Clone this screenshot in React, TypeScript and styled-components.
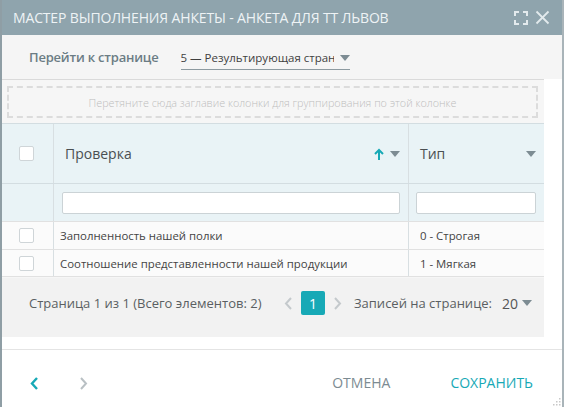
import React from "react";
import styled, { createGlobalStyle } from "styled-components";

const teal = "#17a9b6";

const GlobalStyle = createGlobalStyle`
  html, body {
    margin: 0;
    padding: 0;
    background: #ffffff;
  }
  body {
    font-family: "Open Sans", "Noto Sans", sans-serif;
  }
  * { box-sizing: border-box; }
`;

const Window = styled.div`
  width: 564px;
  height: 407px;
  display: flex;
  flex-direction: column;
  border-left: 2px solid #8f9ea5;
  border-right: 2px solid #a9b4b9;
  background: #ffffff;
  overflow: hidden;
  position: relative;
`;

const TitleBar = styled.div`
  height: 35px;
  flex-shrink: 0;
  background: #8fa4ad;
  display: flex;
  align-items: center;
  justify-content: space-between;
  padding: 0 12px 0 11px;
`;

const Title = styled.div`
  color: #eef3f5;
  font-size: 14px;
  letter-spacing: -0.15px;
`;

const TitleTools = styled.div`
  display: flex;
  align-items: center;
  gap: 7px;
`;

const PageBar = styled.div`
  height: 44px;
  flex-shrink: 0;
  background: #f5f5f5;
  display: flex;
  align-items: center;
  padding-left: 27px;
  gap: 22px;
`;

const PageLabel = styled.div`
  color: #6b7c84;
  font-size: 13px;
  font-weight: 600;
  letter-spacing: -0.2px;
`;

const Select = styled.div`
  width: 169px;
  height: 24px;
  display: flex;
  align-items: center;
  border-bottom: 1px solid #8d9aa0;
  margin-top: 2px;
  gap: 6px;
`;

const SelectText = styled.div`
  flex: 1;
  overflow: hidden;
  white-space: nowrap;
  font-size: 11.5px;
  color: #3f3f3f;
`;

const Caret = styled.span<{ color?: string; size?: number }>`
  display: inline-block;
  width: 0;
  height: 0;
  border-left: ${({ size }) => size ?? 5}px solid transparent;
  border-right: ${({ size }) => size ?? 5}px solid transparent;
  border-top: ${({ size }) => (size ?? 5) + 1}px solid ${({ color }) => color ?? "#7d8c93"};
`;

const GridArea = styled.div`
  width: 542px;
  background: #f6f6f6;
  border-top: 1px solid #dadada;
  display: flex;
  flex-direction: column;
`;

const GroupPanel = styled.div`
  margin: 6px 6px 5px 5px;
  height: 32px;
  border: 2px dashed #dcdcdc;
  display: flex;
  align-items: center;
  justify-content: center;
  color: #bdbdbd;
  font-size: 10.8px;
  font-weight: 300;
`;

const Row = styled.div<{ kind: "head" | "filter" | "data" }>`
  display: grid;
  grid-template-columns: 51px 355px 136px;
  height: ${({ kind }) => (kind === "head" ? 60 : kind === "filter" ? 38 : 28)}px;
  background: ${({ kind }) => (kind === "data" ? "#fbfbfb" : "#e9f3f6")};
  border-top: 1px solid ${({ kind }) => (kind === "data" ? "#e1e1e1" : "#d3dde1")};
  &:last-of-type {
    border-bottom: 1px solid #e1e1e1;
  }
`;

const Cell = styled.div<{ divider?: boolean; pad?: number }>`
  display: flex;
  align-items: center;
  padding-left: ${({ pad }) => pad ?? 0}px;
  padding-right: 8px;
  border-left: ${({ divider }) => (divider ? "1px solid #d8dfe2" : "none")};
  min-width: 0;
`;

const CheckCell = styled(Cell)`
  justify-content: center;
  padding: 0 3px 0 0;
`;

const CheckBox = styled.div`
  width: 15px;
  height: 15px;
  background: #ffffff;
  border: 1px solid #cfd5d8;
  border-radius: 2px;
`;

const HeadText = styled.div`
  flex: 1;
  font-size: 14px;
  color: #4a4f52;
`;

const SortUp = styled.svg`
  margin-right: 6px;
`;

const FilterInput = styled.input`
  width: 100%;
  height: 22px;
  border: 1px solid #cbd3d6;
  background: #ffffff;
  border-radius: 2px;
  outline: none;
`;

const DataText = styled.div`
  font-size: 11.4px;
  color: #444444;
  white-space: nowrap;
  overflow: hidden;
`;

const Pager = styled.div`
  height: 59px;
  margin-top: 1px;
  background: #f2f2f2;
  display: flex;
  align-items: center;
  padding-left: 27px;
  padding-bottom: 9px;
  font-size: 13px;
  color: #5a5f62;
`;

const PagerInfo = styled.div`
  width: 255px;
`;

const PageNav = styled.div`
  display: flex;
  align-items: center;
  gap: 8px;
  margin-right: 12px;
`;

const PageNumber = styled.div`
  width: 24px;
  height: 24px;
  background: ${teal};
  color: #ffffff;
  border-radius: 2px;
  display: flex;
  align-items: center;
  justify-content: center;
  font-size: 14px;
`;

const PerPage = styled.div`
  display: flex;
  align-items: center;
  gap: 4px;
`;

const PerPageValue = styled.span`
  margin-left: 6px;
  font-size: 14px;
  color: #555;
`;

const Footer = styled.div`
  margin-top: auto;
  height: 58px;
  border-top: 1px solid #e4e4e4;
  display: flex;
  align-items: center;
  padding: 8px 29px 0 28px;
`;

const StepNav = styled.div`
  display: flex;
  align-items: center;
  gap: 40px;
  flex: 1;
  padding-top: 2px;
`;

const FooterButton = styled.button<{ primary?: boolean }>`
  background: none;
  border: none;
  padding: 0;
  margin-left: ${({ primary }) => (primary ? 60 : 0)}px;
  font-family: inherit;
  font-size: 14px;
  color: ${({ primary }) => (primary ? teal : "#7c8b92")};
  font-weight: ${({ primary }) => (primary ? 500 : 400)};
  cursor: pointer;
`;

const Grip = styled.svg`
  position: absolute;
  right: 1px;
  bottom: 1px;
`;

const Chevron = ({ dir, color, w = 7, h = 12, sw = 2 }: { dir: "l" | "r"; color: string; w?: number; h?: number; sw?: number }) => (
  <svg width={w + 2} height={h + 2} viewBox={`0 0 ${w + 2} ${h + 2}`}>
    <polyline
      points={dir === "l" ? `${w},1 2,${h / 2 + 1} ${w},${h + 1}` : `2,1 ${w},${h / 2 + 1} 2,${h + 1}`}
      fill="none"
      stroke={color}
      strokeWidth={sw}
    />
  </svg>
);

const rows = [
  { name: "Заполненность нашей полки", type: "0 - Строгая" },
  { name: "Соотношение представленности нашей продукции", type: "1 - Мягкая" },
];

export default function App() {
  return (
    <>
      <GlobalStyle />
      <Window>
        <TitleBar>
          <Title>МАСТЕР ВЫПОЛНЕНИЯ АНКЕТЫ - АНКЕТА ДЛЯ ТТ ЛЬВОВ</Title>
          <TitleTools>
            <svg width="14" height="14" viewBox="0 0 14 14" fill="none" stroke="#e3eaed" strokeWidth="2">
              <polyline points="1,5 1,1 5,1" />
              <polyline points="9,1 13,1 13,5" />
              <polyline points="13,9 13,13 9,13" />
              <polyline points="5,13 1,13 1,9" />
            </svg>
            <svg width="15" height="15" viewBox="0 0 15 15" stroke="#e3eaed" strokeWidth="1.8">
              <line x1="1.5" y1="1.5" x2="13.5" y2="13.5" />
              <line x1="13.5" y1="1.5" x2="1.5" y2="13.5" />
            </svg>
          </TitleTools>
        </TitleBar>

        <PageBar>
          <PageLabel>Перейти к странице</PageLabel>
          <Select>
            <SelectText>5 — Результирующая страница</SelectText>
            <Caret />
          </Select>
        </PageBar>

        <GridArea>
          <GroupPanel>Перетяните сюда заглавие колонки для группирования по этой колонке</GroupPanel>

          <div>
            <Row kind="head">
              <CheckCell>
                <CheckBox />
              </CheckCell>
              <Cell divider pad={11}>
                <HeadText>Проверка</HeadText>
                <SortUp width="10" height="12" viewBox="0 0 10 12" fill="none" stroke={teal} strokeWidth="2">
                  <line x1="5" y1="2" x2="5" y2="12" />
                  <polyline points="1,6 5,2 9,6" />
                </SortUp>
                <Caret />
              </Cell>
              <Cell divider pad={11}>
                <HeadText>Тип</HeadText>
                <Caret />
              </Cell>
            </Row>
            <Row kind="filter">
              <CheckCell />
              <Cell divider pad={8}>
                <FilterInput />
              </Cell>
              <Cell divider pad={7}>
                <FilterInput />
              </Cell>
            </Row>
            {rows.map((r) => (
              <Row kind="data" key={r.name}>
                <CheckCell>
                  <CheckBox />
                </CheckCell>
                <Cell divider pad={6}>
                  <DataText>{r.name}</DataText>
                </Cell>
                <Cell divider pad={11}>
                  <DataText>{r.type}</DataText>
                </Cell>
              </Row>
            ))}
          </div>

          <Pager>
            <PagerInfo>Страница 1 из 1 (Всего элементов: 2)</PagerInfo>
            <PageNav>
              <Chevron dir="l" color="#c4c9cc" w={7} h={11} />
              <PageNumber>1</PageNumber>
              <Chevron dir="r" color="#c4c9cc" w={7} h={11} />
            </PageNav>
            <PerPage>
              Записей на странице:
              <PerPageValue>20</PerPageValue>
              <Caret />
            </PerPage>
          </Pager>
        </GridArea>

        <Footer>
          <StepNav>
            <Chevron dir="l" color={teal} w={7} h={11} sw={2.4} />
            <Chevron dir="r" color="#b9c0c4" w={7} h={11} />
          </StepNav>
          <FooterButton>ОТМЕНА</FooterButton>
          <FooterButton primary>СОХРАНИТЬ</FooterButton>
        </Footer>

        <Grip width="8" height="8" viewBox="0 0 8 8" fill="#c8c8c8">
          <rect x="6" y="0" width="1.5" height="1.5" />
          <rect x="3" y="3" width="1.5" height="1.5" />
          <rect x="6" y="3" width="1.5" height="1.5" />
          <rect x="0" y="6" width="1.5" height="1.5" />
          <rect x="3" y="6" width="1.5" height="1.5" />
          <rect x="6" y="6" width="1.5" height="1.5" />
        </Grip>
      </Window>
    </>
  );
}
